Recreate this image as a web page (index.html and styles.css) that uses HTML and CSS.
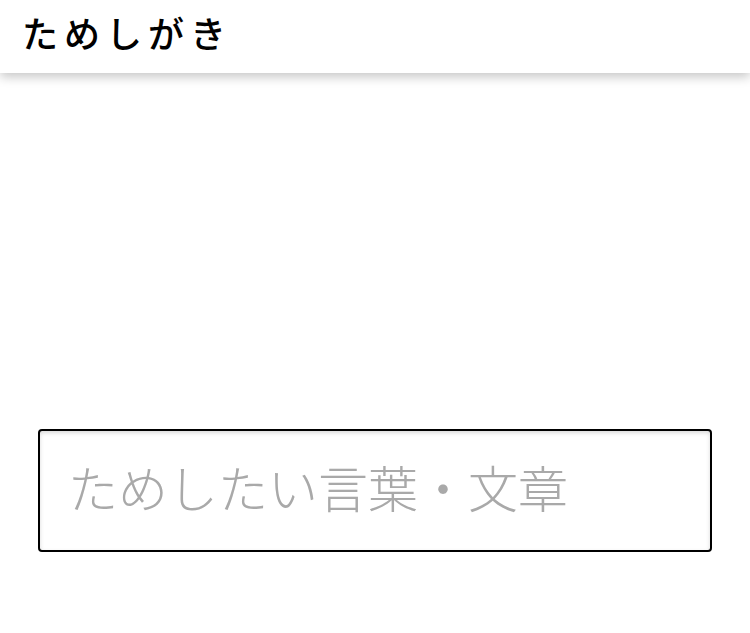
FILE: index.html
```html
<!DOCTYPE html>
<html lang="ja">
<head>
<meta charset="utf-8">
<title>ためしがき</title>
<link rel="stylesheet" href="styles.css">
</head>
<body>
<header class="app-bar">
  <h1 class="app-title">ためしがき</h1>
</header>
<main class="content">
  <div class="canvas"></div>
  <input class="phrase-input" type="text" placeholder="ためしたい言葉・文章">
</main>
</body>
</html>
```

FILE: styles.css
```css
html, body {
  margin: 0;
  padding: 0;
  background: #ffffff;
}
body {
  font-family: "Noto Sans CJK JP", "Noto Sans", sans-serif;
  width: 750px;
  height: 633px;
  overflow: hidden;
}
.app-bar {
  position: relative;
  z-index: 1;
  box-sizing: border-box;
  height: 73px;
  display: flex;
  align-items: center;
  padding: 0 22px 9px 22px;
  background: #ffffff;
  box-shadow: 0 4px 10px rgba(0, 0, 0, 0.22);
}
.app-title {
  margin: 0;
  font-size: 36px;
  font-weight: 500;
  letter-spacing: 6px;
  color: #000000;
  line-height: 1;
}
.content {
  display: flex;
  flex-direction: column;
  padding: 0 38px;
}
.canvas {
  height: 356px;
}
.phrase-input {
  box-sizing: border-box;
  width: 674px;
  height: 123px;
  border: 2px solid #000000;
  border-radius: 4px;
  padding: 0 26px 9px 28px;
  font-family: "Noto Sans CJK JP", sans-serif;
  font-size: 50px;
  font-weight: 300;
  color: #222;
  outline: none;
  box-shadow: inset 0 2px 4px rgba(0, 0, 0, 0.15);
  background: #fff;
}
.phrase-input::placeholder {
  color: #a9a9a9;
}
```
